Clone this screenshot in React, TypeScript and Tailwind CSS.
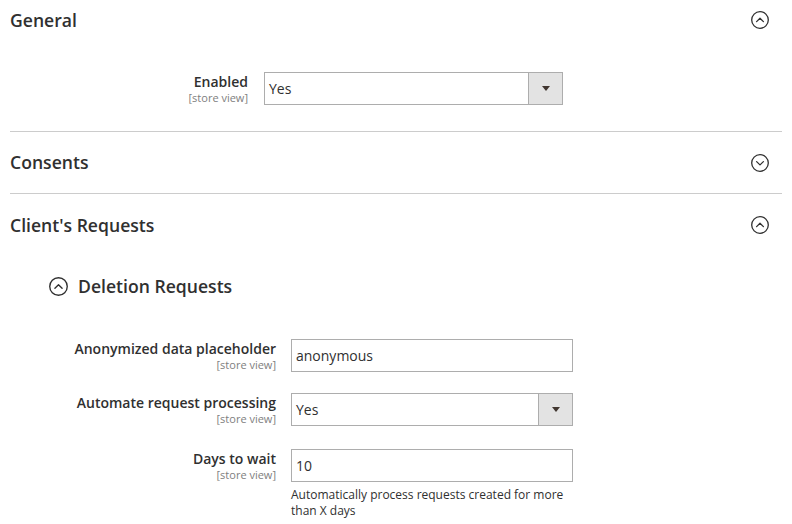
import React from "react";

const Chevron = ({ up, size = 18 }: { up?: boolean; size?: number }) => (
  <svg width={size} height={size} viewBox="0 0 18 18" fill="none" className="shrink-0">
    <circle cx="9" cy="9" r="8.3" stroke="#303030" strokeWidth="1.3" />
    {up ? (
      <path d="M5.6 10.6 L9 7.3 L12.4 10.6" stroke="#303030" strokeWidth="1.3" strokeLinecap="round" strokeLinejoin="round" />
    ) : (
      <path d="M5.6 7.6 L9 10.9 L12.4 7.6" stroke="#303030" strokeWidth="1.3" strokeLinecap="round" strokeLinejoin="round" />
    )}
  </svg>
);

const Select = ({ value, width }: { value: string; width: string }) => (
  <div className={`flex h-[33px] border border-[#adadad] bg-white ${width}`}>
    <div className="flex-1 flex items-center pl-[4px] text-[14px] text-[#303030]">{value}</div>
    <div className="w-[34px] border-l border-[#adadad] bg-[#e3e3e3] flex items-center justify-center">
      <div className="w-0 h-0 border-l-[4px] border-r-[4px] border-t-[5px] border-l-transparent border-r-transparent border-t-[#41362f]" />
    </div>
  </div>
);

const Input = ({ value }: { value: string }) => (
  <div className="flex items-center h-[33px] w-[282px] border border-[#adadad] bg-white pl-[4px] text-[14px] text-[#303030]">
    {value}
  </div>
);

const Label = ({ text, width }: { text: string; width: string }) => (
  <div className={`${width} shrink-0 text-right`}>
    <div className="text-[14px] leading-[20px] font-semibold text-[#303030]">{text}</div>
    <div className="text-[11px] leading-[12px] text-[#808080]">[store view]</div>
  </div>
);

const SectionHeader = ({ title, up, h }: { title: string; up?: boolean; h: string }) => (
  <div className={`flex items-center justify-between ${h}`}>
    <span className="text-[17.6px] font-semibold text-[#303030]">{title}</span>
    <span className="mr-[13px]">
      <Chevron up={up} />
    </span>
  </div>
);

export default function App() {
  return (
    <div className="w-[792px] h-[524px] overflow-hidden bg-white px-[10px]" style={{ fontFamily: '"Open Sans", sans-serif' }}>
      {/* General */}
      <div className="border-b border-[#cccccc]">
        <SectionHeader title="General" up h="h-[40px]" />
        <div className="pt-[32px] pb-[26px] flex">
          <Label text="Enabled" width="w-[238px]" />
          <div className="ml-[16px]">
            <Select value="Yes" width="w-[299px]" />
          </div>
        </div>
      </div>

      {/* Consents */}
      <div className="border-b border-[#cccccc]">
        <SectionHeader title="Consents" h="h-[61px]" />
      </div>

      {/* Client's Requests */}
      <div>
        <SectionHeader title="Client's Requests" up h="h-[62px]" />
        <div className="flex items-center h-[60px] ml-[39px] gap-[10px]">
          <Chevron up size={19} />
          <span className="text-[17.6px] font-semibold text-[#303030]">Deletion Requests</span>
        </div>

        <div className="pt-[23px]">
          <div className="flex mb-[21px]">
            <Label text="Anonymized data placeholder" width="w-[266px]" />
            <div className="ml-[15px]">
              <Input value="anonymous" />
            </div>
          </div>
          <div className="flex mb-[23px]">
            <Label text="Automate request processing" width="w-[266px]" />
            <div className="ml-[15px]">
              <Select value="Yes" width="w-[282px]" />
            </div>
          </div>
          <div className="flex">
            <Label text="Days to wait" width="w-[266px]" />
            <div className="ml-[15px] w-[282px]">
              <Input value="10" />
              <p className="mt-[5px] text-[12px] leading-[16px] text-[#303030]">
                Automatically process requests created for more than X days
              </p>
            </div>
          </div>
        </div>
      </div>
    </div>
  );
}
